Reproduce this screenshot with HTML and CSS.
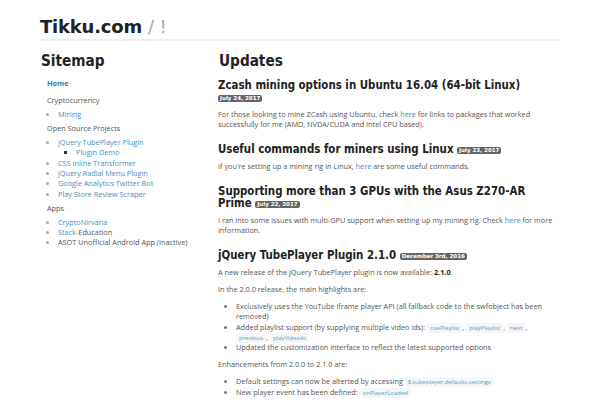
FILE: index.html
```html
<!DOCTYPE html>
<html>
<head>
<meta charset="utf-8">
<link rel="stylesheet" href="styles.css">
</head>
<body>
<div class="container">
  <header class="site-header">
    <h1 class="brand">Tikku.com <span class="slash">/ !</span></h1>
  </header>
  <div class="layout">
    <aside class="sidebar">
      <h2 class="section-title">Sitemap</h2>
      <ul class="nav">
        <li class="nav-home"><a href="#">Home</a></li>
        <li class="nav-group">Cryptocurrency
          <ul class="sub"><li><a href="#">Mining</a></li></ul>
        </li>
        <li class="nav-group">Open Source Projects
          <ul class="sub">
            <li><a href="#">jQuery TubePlayer Plugin</a>
              <ul class="subsub"><li><a href="#">Plugin Demo</a></li></ul>
            </li>
            <li><a href="#">CSS Inline Transformer</a></li>
            <li><a href="#">jQuery Radial Menu Plugin</a></li>
            <li><a href="#">Google Analytics Twitter Bot</a></li>
            <li><a href="#">Play Store Review Scraper</a></li>
          </ul>
        </li>
        <li class="nav-group">Apps
          <ul class="sub">
            <li><a href="#">CryptoNirvana</a></li>
            <li><a href="#">Stack-</a>Education</li>
            <li>ASOT Unofficial Android App (Inactive)</li>
          </ul>
        </li>
      </ul>
    </aside>
    <main class="main">
      <h2 class="section-title">Updates</h2>
      <article class="post">
        <h3 class="post-title">Zcash mining options in Ubuntu 16.04 (64-bit Linux) <span class="badge">July 24, 2017</span></h3>
        <p>For those looking to mine ZCash using Ubuntu, check <a href="#">here</a> for links to packages that worked successfully for me (AMD, NVDA/CUDA and Intel CPU based).</p>
      </article>
      <article class="post">
        <h3 class="post-title">Useful commands for miners using Linux <span class="badge">July 23, 2017</span></h3>
        <p>If you're setting up a mining rig in Linux, <a href="#">here</a> are some useful commands.</p>
      </article>
      <article class="post">
        <h3 class="post-title">Supporting more than 3 GPUs with the Asus Z270-AR Prime <span class="badge">July 22, 2017</span></h3>
        <p>I ran into some issues with multi-GPU support when setting up my mining rig. Check <a href="#">here</a> for more information.</p>
      </article>
      <article class="post">
        <h3 class="post-title">jQuery TubePlayer Plugin 2.1.0 <span class="badge">December 3rd, 2016</span></h3>
        <p>A new release of the jQuery TubePlayer plugin is now available: <strong>2.1.0</strong>.</p>
        <p>In the 2.0.0 release, the main highlights are:</p>
        <ul class="bullets">
          <li>Exclusively uses the YouTube iframe player API (all fallback code to the swfobject has been removed)</li>
          <li>Added playlist support (by supplying multiple video ids): <code>cuePlaylist</code>, <code>playPlaylist</code>, <code>next</code>, <code>previous</code>, <code>playVideoAt</code></li>
          <li>Updated the customization interface to reflect the latest supported options</li>
        </ul>
        <p>Enhancements from 2.0.0 to 2.1.0 are:</p>
        <ul class="bullets">
          <li>Default settings can now be alterted by accessing <code>$.tubeplayer.defaults.settings</code></li>
          <li>New player event has been defined: <code>onPlayerLoaded</code></li>
        </ul>
      </article>
    </main>
  </div>
</div>
</body>
</html>
```
FILE: styles.css
```css
html, body {
  margin: 0;
  padding: 0;
  background: #ffffff;
}
body {
  font-family: "Open Sans", "DejaVu Sans", sans-serif;
  font-size: 7.3px;
  color: #555;
}
a {
  color: #3f8fc4;
  text-decoration: none;
}
.container {
  width: 520px;
  margin: 0 auto;
}
.site-header {
  padding-top: 15px;
  border-bottom: 2px solid #eeeeee;
}
.brand {
  margin: 0;
  font-family: "DejaVu Sans", sans-serif;
  font-weight: bold;
  font-size: 18px;
  letter-spacing: -0.2px;
  line-height: 24px;
  color: #222;
}
.slash {
  color: #aaa;
  font-weight: normal;
}
.layout {
  display: flex;
  gap: 8px;
}
.sidebar {
  width: 170px;
  flex: none;
}
.main {
  flex: 1;
}
.section-title {
  font-family: "DejaVu Sans Condensed", "DejaVu Sans", sans-serif;
  font-stretch: condensed;
  font-weight: bold;
  font-size: 15.2px;
  line-height: 22px;
  margin: 9px 0 7px 1px;
  color: #222;
}
.nav, .nav ul {
  list-style: none;
  margin: 0;
  padding: 0;
}
.nav {
  padding-left: 7px;
  line-height: 10.3px;
  margin-top: -1px;
}
.nav-home a {
  font-weight: bold;
  color: #2a7db5;
}
.nav-home {
  margin-bottom: 6.7px;
}
.nav-group {
  margin-bottom: 3.9px;
}
.nav .sub {
  list-style: disc;
  padding-left: 11px;
  margin-top: 3.7px;
}
.nav .sub li {
  color: #555;
}
.nav .sub li::marker {
  color: #aaa;
}
.nav .subsub {
  list-style: square;
  padding-left: 18px;
}
.nav .subsub li::marker {
  color: #333;
}
.post {
  margin-bottom: 14px;
}
.post-title {
  font-family: "DejaVu Sans Condensed", "DejaVu Sans", sans-serif;
  font-stretch: condensed;
  font-weight: bold;
  font-size: 11.4px;
  line-height: 12px;
  margin: 0 0 6px;
  color: #222;
}
.badge {
  display: inline-block;
  background: #666;
  color: #fff;
  font-family: "DejaVu Sans", sans-serif;
  font-stretch: normal;
  font-size: 5.5px;
  font-weight: bold;
  line-height: 6.5px;
  padding: 0 2px;
  border-radius: 2px;
  vertical-align: 1px;
}
.main p {
  margin: 0 0 7px;
  line-height: 10px;
}
.main strong {
  color: #222;
}
.bullets {
  margin: 0 0 7px;
  padding-left: 18px;
  line-height: 10.3px;
}
.bullets li::marker {
  color: #777;
}
code {
  font-family: "Open Sans", sans-serif;
  font-size: 6px;
  line-height: 6px;
  color: #5a9dc8;
  background: #f4f6f8;
  padding: 1px 3px;
  border-radius: 2px;
}
```
